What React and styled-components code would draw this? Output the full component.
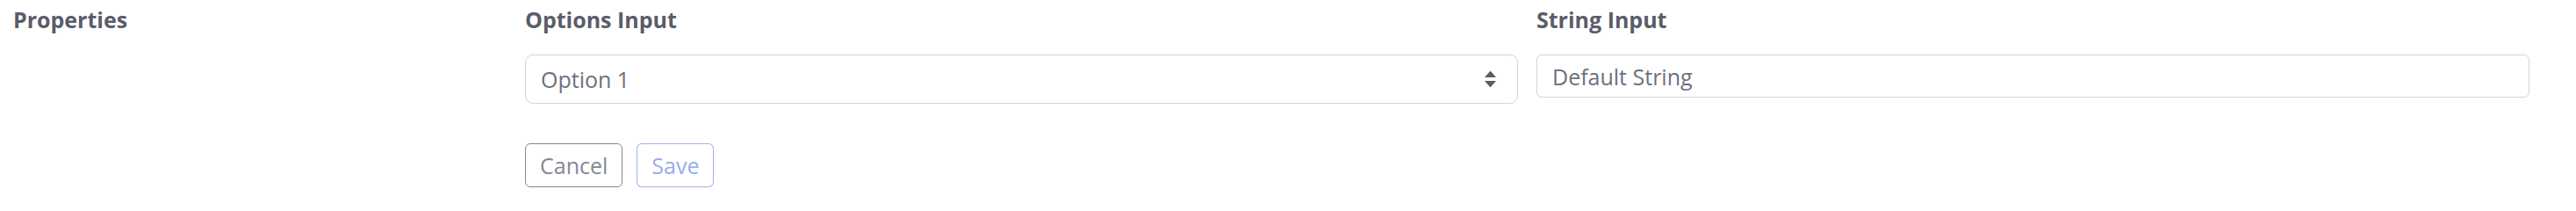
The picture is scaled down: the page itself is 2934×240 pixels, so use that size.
import styled, { createGlobalStyle } from "styled-components";

const GlobalStyle = createGlobalStyle`
  body {
    margin: 0;
    background: #fff;
    font-family: "Open Sans", "Noto Sans", sans-serif;
    color: #858796;
  }
  * {
    box-sizing: border-box;
  }
`;

const FormRow = styled.div`
  display: grid;
  grid-template-columns: 583px 1fr;
  padding: 7px 53px 0 15px;
`;

const SectionLabel = styled.div`
  font-size: 25px;
  font-weight: 700;
  line-height: 30px;
  color: #5a5c69;
`;

const Content = styled.div`
  display: flex;
  flex-direction: column;
`;

const Fields = styled.div`
  display: grid;
  grid-template-columns: 1fr 1fr;
  column-gap: 21px;
  align-items: start;
`;

const Field = styled.div`
  display: flex;
  flex-direction: column;
`;

const FieldLabel = styled.label`
  font-size: 25px;
  font-weight: 700;
  line-height: 30px;
  color: #5a5c69;
  margin-bottom: 25px;
`;

const SelectBox = styled.div`
  position: relative;
  display: flex;
  align-items: center;
  height: 56px;
  padding: 0 17px;
  border: 1.6px solid #d1d3e2;
  border-radius: 9px;
  font-size: 25px;
  color: #6e707e;
`;

const Arrows = styled.svg`
  position: absolute;
  right: 24px;
  top: 50%;
  transform: translateY(-50%);
`;

const TextInput = styled.input`
  height: 49px;
  padding: 0 17px;
  border: 1.6px solid #d1d3e2;
  border-radius: 6px;
  font-family: inherit;
  font-size: 25px;
  color: #6e707e;
  outline: none;
`;

const Actions = styled.div`
  display: flex;
  gap: 16px;
  margin-top: 45px;
`;

const Button = styled.button`
  height: 50px;
  padding: 0 16px;
  background: #fff;
  border: 1.6px solid ${(p) => (p.$primary ? "rgba(78, 115, 223, 0.55)" : "#858796")};
  border-radius: 6px;
  font-family: inherit;
  font-size: 25px;
  color: ${(p) => (p.$primary ? "rgba(78, 115, 223, 0.6)" : "#858796")};
  cursor: ${(p) => (p.disabled ? "default" : "pointer")};
`;

export default function App() {
  return (
    <>
      <GlobalStyle />
      <FormRow>
        <SectionLabel>Properties</SectionLabel>
        <Content>
          <Fields>
            <Field>
              <FieldLabel>Options Input</FieldLabel>
              <SelectBox>
                Option 1
                <Arrows width="13" height="19" viewBox="0 0 13 19">
                  <path d="M6.5 0 L13 7.5 H0 Z" fill="#5a5c69" />
                  <path d="M6.5 19 L13 11.5 H0 Z" fill="#5a5c69" />
                </Arrows>
              </SelectBox>
            </Field>
            <Field>
              <FieldLabel>String Input</FieldLabel>
              <TextInput defaultValue="Default String" />
            </Field>
          </Fields>
          <Actions>
            <Button>Cancel</Button>
            <Button $primary disabled>
              Save
            </Button>
          </Actions>
        </Content>
      </FormRow>
    </>
  );
}
